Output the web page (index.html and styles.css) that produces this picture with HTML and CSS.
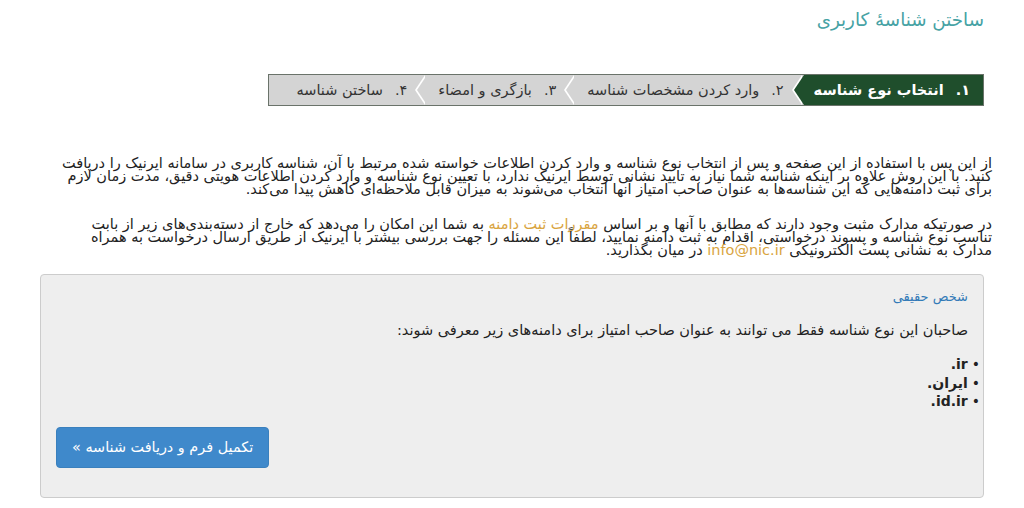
FILE: index.html
```html
<!DOCTYPE html>
<html lang="fa" dir="rtl">
<head>
<meta charset="utf-8">
<title>ساختن شناسهٔ کاربری</title>
<link rel="stylesheet" href="styles.css">
</head>
<body>
<div class="page">
  <h1 class="title">ساختن شناسهٔ کاربری</h1>

  <ol class="steps">
    <li class="step active"><span class="num">۱.</span>انتخاب نوع شناسه</li>
    <li class="step"><span class="num">۲.</span>وارد کردن مشخصات شناسه</li>
    <li class="step"><span class="num">۳.</span>بازگری و امضاء</li>
    <li class="step last"><span class="num">۴.</span>ساختن شناسه</li>
  </ol>

  <p class="intro">از این پس با استفاده از این صفحه و پس از انتخاب نوع شناسه و وارد کردن اطلاعات خواسته شده مرتبط با آن، شناسه کاربری در سامانه ایرنیک را دریافت کنید. با این روش علاوه بر اینکه شناسه شما نیاز به تایید نشانی توسط ایرنیک ندارد، با تعیین نوع شناسه و وارد کردن اطلاعات هویتی دقیق، مدت زمان لازم برای ثبت دامنه‌هایی که این شناسه‌ها به عنوان صاحب امتیاز آنها انتخاب می‌شوند به میزان قابل ملاحظه‌ای کاهش پیدا می‌کند.</p>

  <p class="intro second">در صورتیکه مدارک مثبت وجود دارند که مطابق با آنها و بر اساس <a class="link" href="#">مقررات ثبت دامنه</a> به شما این امکان را می‌دهد که خارج از دسته‌بندی‌های زیر از بابت تناسب نوع شناسه و پسوند درخواستی، اقدام به ثبت دامنه نمایید، لطفاً این مسئله را جهت بررسی بیشتر با ایرنیک از طریق ارسال درخواست به همراه مدارک به نشانی پست الکترونیکی <a class="link" href="#">info@nic.ir</a> در میان بگذارید.</p>

  <div class="panel">
    <h2 class="panel-title">شخص حقیقی</h2>
    <p class="panel-text">صاحبان این نوع شناسه فقط می توانند به عنوان صاحب امتیاز برای دامنه‌های زیر معرفی شوند:</p>
    <ul class="domains">
      <li>ir.</li>
      <li>ایران.</li>
      <li>id.ir.</li>
    </ul>
    <div class="actions">
      <a class="btn" href="#">تکمیل فرم و دریافت شناسه »</a>
    </div>
  </div>
</div>
</body>
</html>
```

FILE: styles.css
```css
html, body {
  margin: 0;
  padding: 0;
  background: #ffffff;
}

body {
  font-family: "DejaVu Sans", "Noto Sans", sans-serif;
  color: #222222;
  font-size: 14.5px;
}

.page {
  margin: 0 40px;
  padding-top: 7px;
}

.title {
  margin: 0;
  font-size: 18.3px;
  font-weight: normal;
  color: #46a2a4;
  line-height: 26px;
}

.steps {
  list-style: none;
  margin: 41px 0 0 0;
  padding: 0;
  display: flex;
  width: fit-content;
  border: 1px solid #6a736a;
  background: #d4d4d4;
  height: 30px;
}

.step {
  position: relative;
  display: flex;
  align-items: center;
  padding: 0 20px 0 11px;
  font-size: 14.5px;
  color: #333333;
  white-space: nowrap;
}

.step .num {
  margin-left: 12px;
}

.step.active {
  background: #1f4e2c;
  color: #ffffff;
  font-weight: bold;
  font-size: 14.5px;
  padding-right: 13px;
  padding-left: 10px;
}

.step.last {
  padding-left: 28px;
}

.step::before,
.step::after {
  content: "";
  position: absolute;
  top: 0;
  width: 0;
  height: 0;
  border-top: 15px solid transparent;
  border-bottom: 15px solid transparent;
  z-index: 1;
}

.step::before {
  left: -12px;
  border-right: 10px solid #ffffff;
}

.step::after {
  left: -10px;
  border-right: 10px solid #d4d4d4;
}

.step.active::after {
  border-right-color: #1f4e2c;
}

.step.last::before,
.step.last::after {
  display: none;
}

.intro {
  margin: 51px -8px 0 10px;
  line-height: 13px;
  font-size: 14.5px;
  color: #222222;
}

.intro.second {
  margin-top: 22px;
}

.link {
  color: #d9a43e;
  text-decoration: none;
}

.panel {
  margin-top: 17px;
  background: #eeeeee;
  border: 1px solid #cccccc;
  border-radius: 4px;
  padding: 14px 15px 29px 15px;
}

.panel-title {
  margin: 0;
  font-size: 13px;
  font-weight: normal;
  color: #337ab7;
  line-height: 16px;
}

.panel-text {
  margin: 16px 0 0 0;
  font-size: 14.5px;
  line-height: 18px;
  color: #222222;
}

.domains {
  list-style: none;
  margin: 16px -12px 0 0;
  padding: 0;
  font-weight: bold;
  font-size: 14px;
  line-height: 18.5px;
}

.domains li::before {
  content: "•";
  display: inline-block;
  margin-left: 4px;
  font-weight: normal;
}

.actions {
  margin-top: 16px;
  display: flex;
  justify-content: flex-end;
}

.btn {
  display: inline-block;
  background: #3f89cb;
  color: #ffffff;
  text-decoration: none;
  border-radius: 4px;
  font-size: 14.4px;
  line-height: 20px;
  padding: 9px 15px 10px 15px;
  border: 1px solid #3a80bd;
}
```
